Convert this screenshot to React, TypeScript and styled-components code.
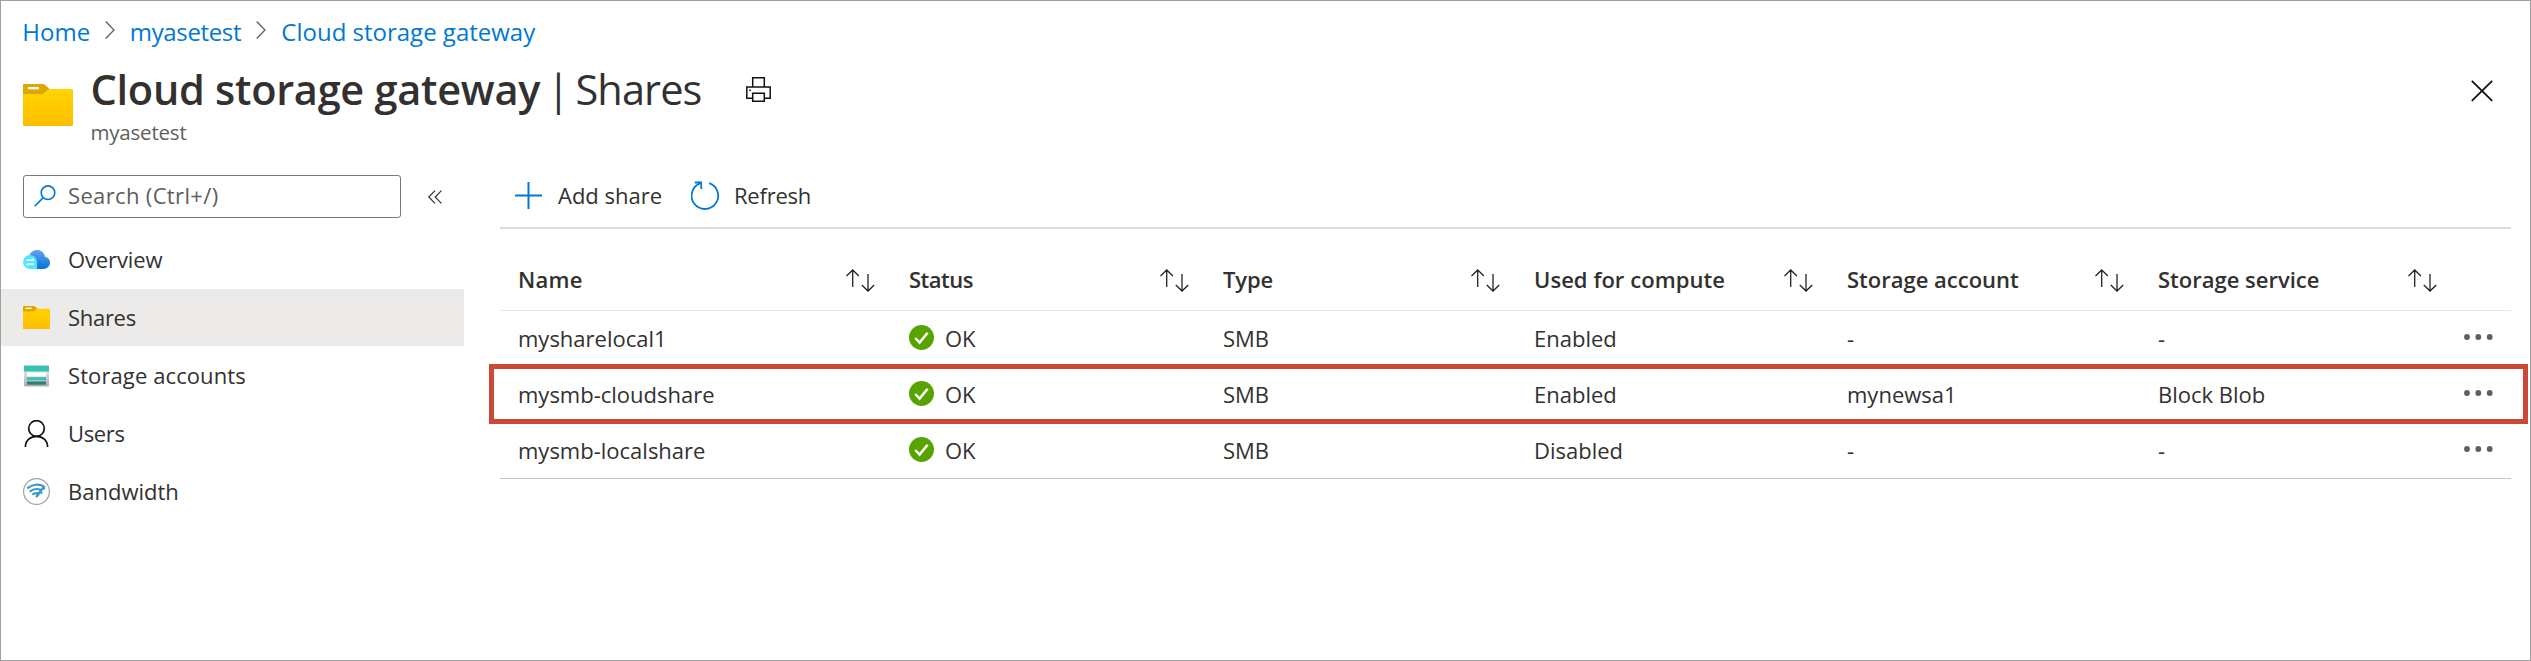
import React from 'react';
import styled, { createGlobalStyle } from 'styled-components';

const GlobalStyle = createGlobalStyle`
  *, *::before, *::after { box-sizing: border-box; }
  body {
    margin: 0;
    background: #fff;
    color: #323130;
    font-family: "Open Sans", "Noto Sans", sans-serif;
    font-size: 22px;
  }
  svg { display: block; flex: none; }
`;

const Frame = styled.div`
  width: 2531px;
  height: 661px;
  border: 1px solid #a0a0a0;
  background: #fff;
  overflow: hidden;
`;

const Breadcrumb = styled.nav`
  display: flex;
  align-items: center;
  height: 60px;
  padding-left: 21.3px;
  font-size: 24px;
`;

const Crumb = styled.a<{ $width?: number; $tracking: number }>`
  width: ${(p) => (p.$width ? `${p.$width}px` : 'auto')};
  color: #0078d4;
  letter-spacing: ${(p) => p.$tracking}px;
  white-space: nowrap;
`;

const CrumbArrow = styled.svg`
  width: 10px;
  height: 18px;
  margin: 0 15px 2px 0;
`;

const Header = styled.header`
  display: flex;
  height: 104px;
  padding: 0 37px 0 22px;
`;

const HeaderIcon = styled.div`
  width: 67.5px;
  padding-top: 23px;
`;

const Titles = styled.div`
  flex: 1;
`;

const Title = styled.h1`
  display: flex;
  align-items: center;
  height: 56px;
  margin: 0;
  font-size: 41.5px;
  line-height: 56px;
  font-weight: 400;
  letter-spacing: -0.9px;
  white-space: nowrap;
`;

const TitleMain = styled.strong`
  width: 456.5px;
  font-weight: 600;
  letter-spacing: -0.27px;
`;

const TitleBar = styled.span`
  width: 28.5px;
`;

const TitlePage = styled.span`
  width: 170px;
`;

const Subtitle = styled.div`
  font-size: 20.5px;
  line-height: 30px;
  letter-spacing: -0.2px;
  color: #605e5c;
`;

const CloseButton = styled.div`
  padding-top: 19px;
`;

const Body = styled.div`
  display: grid;
  grid-template-columns: 499px 2011px;
`;

const Sidebar = styled.aside`
  padding-top: 10px;
`;

const SearchRow = styled.div`
  display: flex;
  align-items: center;
  height: 43px;
  margin-bottom: 13px;
  padding-left: 22px;
`;

const SearchBox = styled.div`
  display: flex;
  align-items: center;
  gap: 12px;
  width: 378px;
  height: 43px;
  margin-right: 27px;
  padding: 0 0 3px 10px;
  border: 1px solid #7a7877;
  border-radius: 3px;
  color: #605e5c;
  letter-spacing: 0.35px;
  svg { margin-top: 2px; }
`;

const Menu = styled.ul`
  display: flex;
  flex-direction: column;
  gap: 1px;
  width: 463px;
  margin: 0;
  padding: 0;
  list-style: none;
`;

const MenuItem = styled.li<{ $selected?: boolean; $tracking?: number }>`
  display: flex;
  align-items: center;
  gap: 18px;
  height: 57px;
  padding: 0 0 2px 22px;
  background: ${(p) => (p.$selected ? '#edebe9' : 'transparent')};
  letter-spacing: ${(p) => p.$tracking ?? 0}px;
  svg { margin-top: 1px; }
`;

const Toolbar = styled.div`
  display: flex;
  height: 64px;
  padding: 0 0 3px 15px;
  border-bottom: 2px solid #dcdcdc;
  svg { margin-top: 2px; }
`;

const Command = styled.div<{ $width: number; $gap: number; $tracking?: number }>`
  display: flex;
  align-items: center;
  gap: ${(p) => p.$gap}px;
  width: ${(p) => p.$width}px;
  letter-spacing: ${(p) => p.$tracking ?? 0}px;
  white-space: nowrap;
`;

const Row = styled.div`
  position: relative;
  display: grid;
  grid-template-columns: 391px 314px 311px 313px 311px 313px 40px;
  align-items: center;
  height: 56px;
  padding-left: 18px;
`;

const HeadRow = styled(Row)`
  height: 82px;
  padding-top: 20px;
  border-bottom: 1px solid #e6e6e6;
  font-weight: 600;
`;

const DataRow = styled(Row)<{ $highlighted?: boolean }>`
  &:last-child {
    padding-top: 1px;
    border-bottom: 1px solid #c8c6c4;
  }
  &::after {
    content: "";
    display: ${(p) => (p.$highlighted ? 'block' : 'none')};
    position: absolute;
    top: -3px;
    right: -17px;
    bottom: -1px;
    left: -11px;
    border: 5px solid #cc4837;
  }
`;

const HeadCell = styled.div<{ $tracking?: number }>`
  display: flex;
  align-items: center;
  justify-content: space-between;
  padding: 0 34px 2px 0;
  letter-spacing: ${(p) => p.$tracking ?? 0}px;
  white-space: nowrap;
  svg { margin-top: 3px; }
`;

const Cell = styled.div`
  padding-bottom: 2px;
  white-space: nowrap;
`;

const StatusCell = styled(Cell)`
  display: flex;
  align-items: center;
  gap: 11px;
  svg { margin-bottom: 1px; }
`;

const MoreCell = styled.div`
  justify-self: end;
  margin: 0 18px 5px 0;
`;

const Folder = ({ id, width, height }: { id: string; width: number; height: number }) => (
  <svg width={width} height={height} viewBox="0 0 47 42" preserveAspectRatio="none">
    <defs>
      <linearGradient id={id} x1="0" y1="0" x2="0" y2="1">
        <stop offset="0" stopColor="#ffd400" />
        <stop offset="1" stopColor="#ffbd00" />
      </linearGradient>
    </defs>
    <path d="M1 0h17.5c1 0 1.700.3 2.300.9L25 5v6H0V1q0-1 1-1z" fill="#dfa500" />
    <rect x="4.500" y="3" width="10.500" height="2.300" fill="#fff" />
    <path d="M0 10h17.500c1 0 1.800-.3 2.500-1l3.300-3.200c.5-.5 1-.8 1.700-.8H46q1 0 1 1v35q0 1-1 1H1q-1 0-1-1z" fill={`url(#${id})`} />
  </svg>
);

const CloudIcon = () => (
  <svg width="27" height="27" viewBox="0 0 27 27">
    <defs>
      <linearGradient id="cloudFill" x1="0" y1="0" x2="0" y2="1">
        <stop offset="0" stopColor="#66a0f2" />
        <stop offset="1" stopColor="#0474d6" />
      </linearGradient>
    </defs>
    <path d="M6 23V11.500C6.500 7 9.800 4 14 4c4.300 0 7.300 2.800 8 6.700 3 .5 5 2.900 5 5.900 0 3.500-2.700 6.400-6.500 6.400z" fill="url(#cloudFill)" />
    <path d="M14 23H7a7 7 0 1 1 7-7z" fill="#50e6ff" />
    <path d="M3.500 14.300h7.500M3.500 18.300h7.500" stroke="#fff" strokeWidth="1.500" />
    <path d="M9 12l3 2.500H9zM5.500 20.500l-3-2.500h3z" fill="#fff" />
  </svg>
);

const StorageIcon = () => (
  <svg width="27" height="27" viewBox="0 0 27 27">
    <defs>
      <linearGradient id="storageFill" x1="0" y1="0" x2="0" y2="1">
        <stop offset="0" stopColor="#e4e4e4" />
        <stop offset="1" stopColor="#adadad" />
      </linearGradient>
    </defs>
    <path d="M1 9h25v14.500q0 1-1 1H2q-1 0-1-1z" fill="url(#storageFill)" />
    <path d="M1.800 3.500h23.400q.8 0 .8.800V9.500H1V4.300q0-.8.800-.8z" fill="#37c2b1" />
    <rect x="4" y="10.500" width="19" height="4" fill="#fff" />
    <rect x="4" y="15.200" width="19" height="3" fill="#37c2b1" />
    <rect x="4" y="19.500" width="19" height="3.200" fill="#258277" />
  </svg>
);

const UserIcon = () => (
  <svg width="27" height="27" viewBox="0 0 27 27" fill="none" stroke="#111" strokeWidth="1.700">
    <circle cx="13.500" cy="8.500" r="7.800" />
    <path d="M2.400 27c0-6.500 5-10.700 11.100-10.700S24.600 20.500 24.600 27" />
  </svg>
);

const BandwidthIcon = () => (
  <svg width="27" height="27" viewBox="0 0 27 27" fill="none">
    <circle cx="13.500" cy="13.500" r="12.900" fill="#fff" stroke="#a0a1a2" strokeWidth="1.200" />
    <path d="M4.300 10.300C9.500 6 16 5.800 20.500 8.300" stroke="#3999c6" strokeWidth="2.200" />
    <path d="M6.700 13.700c3.400-2.800 7.600-3.300 11.300-1.700" stroke="#3999c6" strokeWidth="2.200" />
    <path d="M9.300 16.700c2-1.500 4-1.900 6.200-1.300" stroke="#3999c6" strokeWidth="2.200" />
    <path d="M22.800 8.300l-8 10.700c-.8 1-2.800.4-2.200-1.300L20 8z" fill="#3999c6" />
    <path d="M20.300 9.800l1.400 1.500M17.800 14.500l1.500 1" stroke="#3999c6" strokeWidth="1.800" />
  </svg>
);

const SearchIcon = () => (
  <svg width="22" height="22" viewBox="0 0 22 22" fill="none" stroke="#0078d4" strokeWidth="1.600">
    <circle cx="14" cy="7.700" r="6.800" />
    <path d="M9.300 12.600L.7 21.200" />
  </svg>
);

const CollapseIcon = () => (
  <svg width="14" height="14" viewBox="0 0 14 14" fill="none" stroke="#323130" strokeWidth="1.200">
    <path d="M7 .6L.8 7 7 13.400M13.400.6L7.200 7l6.200 6.400" />
  </svg>
);

const PrintIcon = () => (
  <svg width="25" height="25" viewBox="0 0 25 25" fill="none" stroke="#111" strokeWidth="1.500">
    <path d="M6.700 10V.8h11.600V10" />
    <path d="M6.500 21.200H.8V10h23.400v11.200h-5.700" />
    <path d="M6.700 16.300h11.600v8H6.700z" />
    <path d="M3.200 13.200h1.600" />
  </svg>
);

const CloseIcon = () => (
  <svg width="22" height="22" viewBox="0 0 22 22" stroke="#111" strokeWidth="1.800">
    <path d="M.8.900l20.400 20M21.200.9l-20.400 20" />
  </svg>
);

const PlusIcon = () => (
  <svg width="27" height="27" viewBox="0 0 27 27" stroke="#0078d4" strokeWidth="2">
    <path d="M13.500 0v27M0 13.500h27" />
  </svg>
);

const RefreshIcon = () => (
  <svg width="29" height="29" viewBox="0 0 29 29" fill="none" stroke="#0078d4" strokeWidth="1.800">
    <path d="M18.200 2.100A13.300 13.300 0 1 1 9.600 2.100" />
    <path d="M3.800 1.500h6.400v6.500" />
  </svg>
);

const SortIcon = () => (
  <svg width="29" height="23" viewBox="0 0 29 23" fill="none" stroke="#222" strokeWidth="1.300">
    <path d="M6.700 18V1.200M.5 7l6.200-6 6.200 6" />
    <path d="M22 5v16.800M15.800 16l6.200 6 6.200-6" />
  </svg>
);

const OkIcon = () => (
  <svg width="25" height="25" viewBox="0 0 25 25">
    <circle cx="12.500" cy="12.500" r="12.500" fill="#57a300" />
    <path d="M6.300 13l4.300 4.500 8-9.800" fill="none" stroke="#fff" strokeWidth="2.500" />
  </svg>
);

const MoreIcon = () => (
  <svg width="29" height="6" viewBox="0 0 29 6" fill="#605e5c">
    <circle cx="3" cy="3" r="2.900" />
    <circle cx="14.300" cy="3" r="2.900" />
    <circle cx="25.700" cy="3" r="2.900" />
  </svg>
);

const Arrow = () => (
  <CrumbArrow viewBox="0 0 10 18" fill="none" stroke="#605e5c" strokeWidth="1.300">
    <path d="M.7.500L9 9 .7 17.500" />
  </CrumbArrow>
);

const columns = [
  { label: 'Name', tracking: 0.25 },
  { label: 'Status', tracking: -0.5 },
  { label: 'Type', tracking: -0.1 },
  { label: 'Used for compute', tracking: 0.05 },
  { label: 'Storage account', tracking: 0 },
  { label: 'Storage service', tracking: 0 },
];

const shares = [
  { name: 'mysharelocal1', compute: 'Enabled', account: '-', service: '-' },
  { name: 'mysmb-cloudshare', compute: 'Enabled', account: 'mynewsa1', service: 'Block Blob', highlighted: true },
  { name: 'mysmb-localshare', compute: 'Disabled', account: '-', service: '-' },
];

export default function App() {
  return (
    <>
      <GlobalStyle />
      <Frame>
        <Breadcrumb>
          <Crumb $width={82.5} $tracking={0}>Home</Crumb>
          <Arrow />
          <Crumb $width={126.5} $tracking={-0.35}>myasetest</Crumb>
          <Arrow />
          <Crumb $tracking={0}>Cloud storage gateway</Crumb>
        </Breadcrumb>
        <Header>
          <HeaderIcon>
            <Folder id="folderLarge" width={50} height={42} />
          </HeaderIcon>
          <Titles>
            <Title>
              <TitleMain>Cloud storage gateway</TitleMain>
              <TitleBar>|</TitleBar>
              <TitlePage>Shares</TitlePage>
              <PrintIcon />
            </Title>
            <Subtitle>myasetest</Subtitle>
          </Titles>
          <CloseButton>
            <CloseIcon />
          </CloseButton>
        </Header>
        <Body>
          <Sidebar>
            <SearchRow>
              <SearchBox>
                <SearchIcon />
                Search (Ctrl+/)
              </SearchBox>
              <CollapseIcon />
            </SearchRow>
            <Menu>
              <MenuItem $tracking={-0.13}><CloudIcon />Overview</MenuItem>
              <MenuItem $selected $tracking={-0.3}><Folder id="folderSmall" width={27} height={23} />Shares</MenuItem>
              <MenuItem $tracking={0.1}><StorageIcon />Storage accounts</MenuItem>
              <MenuItem $tracking={-0.35}><UserIcon />Users</MenuItem>
              <MenuItem><BandwidthIcon />Bandwidth</MenuItem>
            </Menu>
          </Sidebar>
          <main>
            <Toolbar>
              <Command $width={176} $gap={16}><PlusIcon />Add share</Command>
              <Command $width={140} $gap={14} $tracking={-0.23}><RefreshIcon />Refresh</Command>
            </Toolbar>
            <HeadRow>
              {columns.map((c) => (
                <HeadCell key={c.label} $tracking={c.tracking}>
                  {c.label}
                  <SortIcon />
                </HeadCell>
              ))}
            </HeadRow>
            {shares.map((s) => (
              <DataRow key={s.name} $highlighted={s.highlighted}>
                <Cell>{s.name}</Cell>
                <StatusCell><OkIcon />OK</StatusCell>
                <Cell>SMB</Cell>
                <Cell>{s.compute}</Cell>
                <Cell>{s.account}</Cell>
                <Cell>{s.service}</Cell>
                <MoreCell><MoreIcon /></MoreCell>
              </DataRow>
            ))}
          </main>
        </Body>
      </Frame>
    </>
  );
}
